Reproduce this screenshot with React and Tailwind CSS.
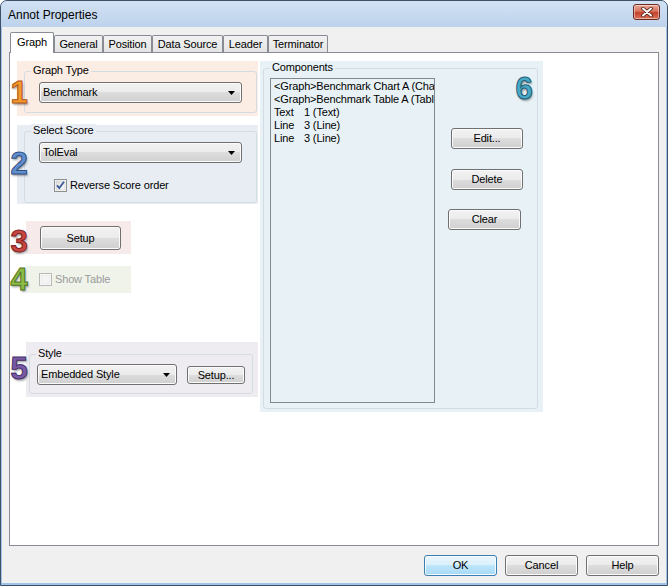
import React from "react";

const BTN =
  "flex items-center justify-center border border-[#707070] rounded-[3px] bg-[linear-gradient(#f2f2f2,#ebebeb_50%,#dddddd_50%,#cfcfcf)] shadow-[inset_0_0_0_1px_#fbfbfb] text-[11px] text-black";

function Button({ className = "", children }) {
  return <div className={`${BTN} ${className}`}>{children}</div>;
}

function Combo({ className = "", children }) {
  return (
    <div className={`${BTN} !justify-start pl-[3px] pr-[6px] ${className}`}>
      <span className="flex-1 whitespace-nowrap">{children}</span>
      <svg width="7" height="4" viewBox="0 0 7 4">
        <path d="M0 0H7L3.5 4Z" fill="#000" />
      </svg>
    </div>
  );
}

function Group({ label, labelBg, className = "", children }) {
  return (
    <div className={`relative border border-[#d3dce3] rounded-[3px] ${className}`}>
      <span
        className={`absolute left-[6px] top-[-8px] px-[2px] text-[11px] leading-[13px] text-black ${labelBg}`}
      >
        {label}
      </span>
      {children}
    </div>
  );
}

function Digit({ children, className }) {
  return (
    <span
      className={`absolute w-[18px] text-center text-[31px] leading-none font-bold tracking-normal font-['Liberation_Sans',Arial,sans-serif] [text-shadow:1px_2px_2px_rgba(0,0,0,0.35)] ${className}`}
    >
      {children}
    </span>
  );
}

function CheckBox({ checked, disabled }) {
  return (
    <svg width="13" height="13" viewBox="0 0 13 13">
      <defs>
        <linearGradient id={disabled ? "cbd" : "cbn"} x1="0" y1="0" x2="1" y2="1">
          <stop offset="0" stopColor={disabled ? "#f4f4f4" : "#dcdcdc"} />
          <stop offset="1" stopColor={disabled ? "#f4f4f4" : "#fbfbfb"} />
        </linearGradient>
      </defs>
      <rect x="0.5" y="0.5" width="12" height="12" fill="#fff" stroke={disabled ? "#b8b8b8" : "#8e8f8f"} />
      <rect x="2" y="2" width="9" height="9" fill={`url(#${disabled ? "cbd" : "cbn"})`} stroke={disabled ? "#e2e2e2" : "#c7c7c7"} strokeWidth="0.6" />
      {checked && (
        <path d="M3 6.3L5.3 9L10 2.8" fill="none" stroke="#3e5a9a" strokeWidth="1.8" />
      )}
    </svg>
  );
}

const TAB_BASE =
  "flex items-center justify-center text-[11px] text-black border border-b-0 border-[#898c95]";

function Tab({ w, children }) {
  return (
    <div
      className={`${TAB_BASE} h-[17px] mb-[1px] bg-[linear-gradient(#f2f2f2,#e4e4e4)] rounded-t-[2px] ${w}`}
    >
      {children}
    </div>
  );
}

export default function App() {
  return (
    <div className="w-[668px] h-[586px] flex flex-col border border-[#3d5068] rounded-t-[7px] bg-[#9fc3e8] overflow-hidden font-['Liberation_Sans',Arial,sans-serif] tracking-[-0.15px] text-black select-none">
      {/* Title bar */}
      <div className="h-[26px] flex items-center justify-between pl-[7px] pr-[7px] bg-[linear-gradient(#d2e1f3,#bdd3ec)]">
        <span className="text-[12px] leading-none pt-[1px] tracking-normal">Annot Properties</span>
        <div className="w-[27px] h-[16px] mt-[-4px] flex items-center justify-center border border-[#6b2a22] rounded-[3px] bg-[linear-gradient(#e9a898,#d6725c_45%,#c4412a_55%,#d8735c)] shadow-[inset_0_0_0_1px_rgba(255,255,255,0.45)]">
          <svg width="12" height="10" viewBox="0 0 12 10">
            <path d="M2 1.5L10 8.5M10 1.5L2 8.5" stroke="#4a2019" strokeWidth="3.6" strokeLinecap="round" />
            <path d="M2 1.5L10 8.5M10 1.5L2 8.5" stroke="#ffffff" strokeWidth="1.9" strokeLinecap="round" />
          </svg>
        </div>
      </div>

      {/* Client area */}
      <div className="flex-1 mx-[1px] mb-[2px] bg-[#f0f0f0] pt-[5px] pl-[7px] pr-[7px] flex flex-col">
        {/* Tabs */}
        <div className="relative z-10 h-[21px] flex items-end">
          <div
            className={`${TAB_BASE} ml-[1px] w-[44px] h-[21px] bg-white rounded-t-[2px] pb-[2px]`}
          >
            Graph
          </div>
          <Tab w="w-[49px]">General</Tab>
          <Tab w="w-[49px]">Position</Tab>
          <Tab w="w-[71px]">Data Source</Tab>
          <Tab w="w-[45px]">Leader</Tab>
          <Tab w="w-[60px]">Terminator</Tab>
        </div>

        {/* Panel */}
        <div className="-mt-[1px] w-[650px] h-[494px] border border-[#898c95] bg-white flex items-start">
          {/* Left column */}
          <div className="ml-[7px] mt-[8px] w-[241px] flex flex-col items-start">
            {/* Region 1 */}
            <div className="relative w-[241px] h-[55px] bg-[#fcede4] pt-[10px] pl-[7px]">
              <Group label="Graph Type" labelBg="bg-[#fcede4]" className="w-[233px] h-[42px] pt-[10px] pl-[14px]">
                <Combo className="w-[203px] h-[21px]">Benchmark</Combo>
              </Group>
              <Digit className="left-[-7px] top-[16px] text-[#f39a2c] [-webkit-text-stroke:1px_#b1561b]">1</Digit>
            </div>

            {/* Region 2 */}
            <div className="relative mt-[9px] w-[241px] h-[79px] bg-[#e8edf3] pt-[6px] pl-[7px]">
              <Group label="Select Score" labelBg="bg-[#e8edf3]" className="w-[233px] h-[72px] pt-[10px] pl-[14px]">
                <Combo className="w-[203px] h-[21px]">TolEval</Combo>
                <div className="mt-[14px] ml-[15px] flex items-center gap-[3px] text-[11px]">
                  <CheckBox checked />
                  <span>Reverse Score order</span>
                </div>
              </Group>
              <Digit className="left-[-7px] top-[23px] text-[#5f8fcf] [-webkit-text-stroke:1px_#2f4f86]">2</Digit>
            </div>

            {/* Region 3 */}
            <div className="relative mt-[17px] ml-[9px] w-[105px] h-[33px] bg-[#f6eaea] pt-[5px] pl-[14px]">
              <Button className="w-[81px] h-[24px]">Setup</Button>
              <Digit className="left-[-16px] top-[5px] text-[#c9453f] [-webkit-text-stroke:1px_#7e2323]">3</Digit>
            </div>

            {/* Region 4 */}
            <div className="relative mt-[12px] ml-[9px] w-[105px] h-[27px] bg-[#eff3ea] pl-[13px] flex items-center gap-[3px] text-[11px] text-[#9a9a9a]">
              <CheckBox disabled />
              <span>Show Table</span>
              <Digit className="left-[-16px] top-[-2px] text-[#8cbc45] [-webkit-text-stroke:1px_#4f7422]">4</Digit>
            </div>

            {/* Region 5 */}
            <div className="relative mt-[49px] ml-[9px] w-[232px] h-[55px] bg-[#efecf1] pt-[12px] pl-[3px]">
              <Group label="Style" labelBg="bg-[#efecf1]" className="w-[224px] h-[40px] pt-[9px] pl-[7px] flex items-start">
                <Combo className="w-[140px] h-[21px]">Embedded Style</Combo>
                <Button className="ml-[10px] mt-[2px] w-[58px] h-[18px]">Setup...</Button>
              </Group>
              <Digit className="left-[-16px] top-[11px] text-[#7a5aa6] [-webkit-text-stroke:1px_#46306a]">5</Digit>
            </div>
          </div>

          {/* Right region */}
          <div className="relative ml-[2px] mt-[8px] w-[283px] h-[351px] bg-[#e8f2f6] pt-[7px] pl-[3px]">
            <Group label="Components" labelBg="bg-[#e8f2f6]" className="w-[275px] h-[341px] flex items-start">
              <div className="ml-[6px] mt-[9px] w-[165px] h-[325px] border border-[#828790] overflow-hidden pl-[3px] pt-[1px] text-[11px] leading-[13px] whitespace-nowrap">
                <div>&lt;Graph&gt;Benchmark Chart A (Chart)</div>
                <div>&lt;Graph&gt;Benchmark Table A (Table)</div>
                <div>
                  <span className="inline-block w-[30px]">Text</span>1 (Text)
                </div>
                <div>
                  <span className="inline-block w-[30px]">Line</span>3 (Line)
                </div>
                <div>
                  <span className="inline-block w-[30px]">Line</span>3 (Line)
                </div>
              </div>
              <div className="flex flex-col items-start">
                <Button className="ml-[16px] mt-[59px] w-[72px] h-[21px]">Edit...</Button>
                <Button className="ml-[16px] mt-[20px] w-[72px] h-[21px]">Delete</Button>
                <Button className="ml-[13px] mt-[19px] w-[73px] h-[21px]">Clear</Button>
              </div>
            </Group>
            <Digit className="left-[255px] top-[12px] text-[#47a9c6] [-webkit-text-stroke:1px_#23607a]">6</Digit>
          </div>
        </div>

        {/* Bottom buttons */}
        <div className="mt-[9px] w-[650px] flex justify-end gap-[8px]">
          <div className="flex items-center justify-center w-[73px] h-[21px] border border-[#3c7fb1] rounded-[3px] bg-[linear-gradient(#eaf6fd,#d9f0fc_50%,#bee6fd_50%,#a7d9f5)] shadow-[inset_0_0_0_1px_#f4fbff] text-[11px]">
            OK
          </div>
          <Button className="w-[73px] h-[21px]">Cancel</Button>
          <Button className="w-[73px] h-[21px]">Help</Button>
        </div>
      </div>
    </div>
  );
}
